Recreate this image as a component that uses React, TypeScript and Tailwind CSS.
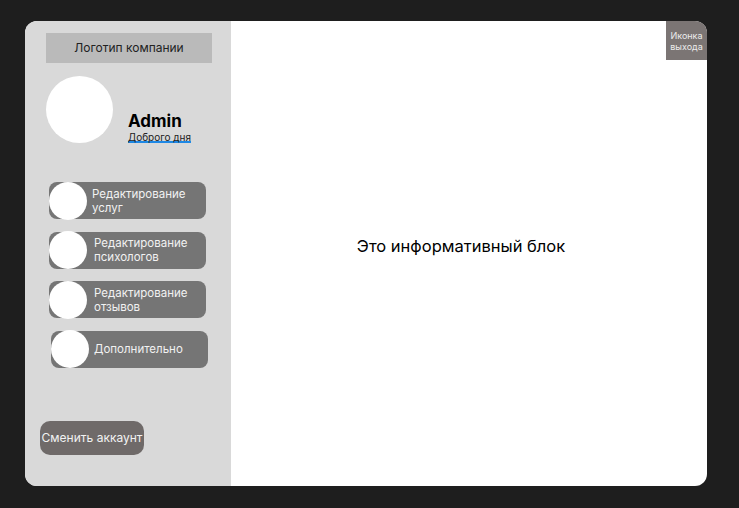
const menu = [
  ['Редактирование', 'услуг'],
  ['Редактирование', 'психологов'],
  ['Редактирование', 'отзывов'],
  ['Дополнительно'],
];

const App = () => {
  return (
    <div className="w-[739px] h-[508px] bg-[#1e1e1e] pt-[21px] pl-[25px] font-[family-name:Inter,sans-serif]">
      <div className="w-[682px] h-[465px] flex rounded-[12px] overflow-hidden bg-white">
        {/* Sidebar */}
        <aside className="w-[206px] bg-[#d9d9d9] flex flex-col">
          <div className="mt-[12px] ml-[21px] w-[166px] h-[30px] bg-[#bababa] flex items-center justify-center text-[12px] text-[#222]">
            Логотип компании
          </div>

          <div className="flex items-start mt-[13px] ml-[21px]">
            <div className="w-[67px] h-[67px] rounded-full bg-white" />
            <div className="ml-[15px] mt-[35px] flex flex-col">
              <span className="text-[17px] font-bold leading-[20px] text-black">Admin</span>
              <span className="text-[10px] leading-[12px] text-[#222] underline decoration-[#1e88e5] decoration-[1.5px] underline-offset-[0px] [text-decoration-skip-ink:none]">
                Доброго дня
              </span>
            </div>
          </div>

          <nav className="mt-[39px] flex flex-col gap-[12.5px]">
            {menu.map((label, i) => (
              <div
                key={i}
                className={`${i === 3 ? 'ml-[26px]' : 'ml-[24px]'} w-[157px] h-[37px] rounded-[8px] bg-[#757575] flex items-center`}
              >
                <div className="w-[38px] h-[38px] rounded-full bg-white shrink-0" />
                <div className={`${i === 1 || i === 2 ? 'ml-[7px]' : 'ml-[5px]'} text-[11.5px] leading-[14px] text-[#f2f2f2]`}>
                  {label.map((l) => (
                    <div key={l}>{l}</div>
                  ))}
                </div>
              </div>
            ))}
          </nav>

          <div className="mt-[53px] ml-[15px]">
            <button className="w-[104px] h-[34px] rounded-[10px] bg-[#6f6a69] text-[12px] text-[#f2f2f2] flex items-center justify-center whitespace-nowrap">
              Сменить аккаунт
            </button>
          </div>
        </aside>

        {/* Main content */}
        <main className="flex-1 flex flex-col">
          <div className="flex justify-end">
            <div className="w-[41px] h-[39px] bg-[#7b7574] text-[9px] leading-[11px] text-[#ececec] flex flex-col items-center justify-center">
              <span>Иконка</span>
              <span>выхода</span>
            </div>
          </div>
          <div className="flex justify-center pr-[16px] mt-[174px]">
            <span className="text-[16.5px] text-black">Это информативный блок</span>
          </div>
        </main>
      </div>
    </div>
  );
};

export default App;
